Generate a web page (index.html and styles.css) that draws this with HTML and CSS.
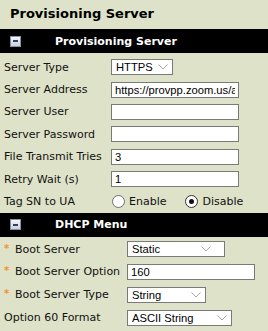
FILE: index.html
```html
<!DOCTYPE html>
<html lang="en">
    <head>
        <meta charset="UTF-8">
        <title>Provisioning Server</title>
        <link rel="stylesheet" href="styles.css">
    </head>
    <body>
        <h1 class="page-title">Provisioning Server</h1>

        <!--provisioning server panel-->
        <section class="panel">
            <div class="panel-bar">
                <span class="collapse-btn"><span class="collapse-minus"></span></span>
                <span class="panel-title">Provisioning Server</span>
            </div>
            <div class="form-grid server-form">
                <label>Server Type</label>
                <div class="select select-https"><span>HTTPS</span>
                    <svg class="chevron" width="10" height="6" viewBox="0 0 10 6"><path d="M0.5 0.5 L5 5 L9.5 0.5" fill="none" stroke="#a6a6a6" stroke-width="1"/></svg>
                </div>

                <label>Server Address</label>
                <input type="text" class="text-input" value="https://provpp.zoom.us/api/v2/pbx/provisioning">

                <label>Server User</label>
                <input type="text" class="text-input" value="">

                <label>Server Password</label>
                <input type="password" class="text-input" value="">

                <label>File Transmit Tries</label>
                <input type="text" class="text-input" value="3">

                <label>Retry Wait (s)</label>
                <input type="text" class="text-input" value="1">

                <label>Tag SN to UA</label>
                <div class="radio-group">
                    <label class="radio-option"><input type="radio" name="tag-sn"> Enable</label>
                    <label class="radio-option"><input type="radio" name="tag-sn" checked> Disable</label>
                </div>
            </div>
        </section>

        <!--dhcp menu panel-->
        <section class="panel">
            <div class="panel-bar">
                <span class="collapse-btn"><span class="collapse-minus"></span></span>
                <span class="panel-title">DHCP Menu</span>
            </div>
            <div class="form-grid dhcp-form">
                <label><span class="required">*</span>Boot Server</label>
                <div class="select select-static"><span>Static</span>
                    <svg class="chevron" width="10" height="6" viewBox="0 0 10 6"><path d="M0.5 0.5 L5 5 L9.5 0.5" fill="none" stroke="#a6a6a6" stroke-width="1"/></svg>
                </div>

                <label><span class="required">*</span>Boot Server Option</label>
                <input type="text" class="text-input" value="160">

                <label><span class="required">*</span>Boot Server Type</label>
                <div class="select select-string"><span>String</span>
                    <svg class="chevron" width="10" height="6" viewBox="0 0 10 6"><path d="M0.5 0.5 L5 5 L9.5 0.5" fill="none" stroke="#a6a6a6" stroke-width="1"/></svg>
                </div>

                <label>Option 60 Format</label>
                <div class="select select-ascii"><span>ASCII String</span>
                    <svg class="chevron" width="10" height="6" viewBox="0 0 10 6"><path d="M0.5 0.5 L5 5 L9.5 0.5" fill="none" stroke="#a6a6a6" stroke-width="1"/></svg>
                </div>
            </div>
        </section>
    </body>
</html>
```

FILE: styles.css
```css
body {
    margin: 0;
    background-color: #dee2c8; /*olive grey page*/
    color: #111;
    font-family: "DejaVu Sans", Verdana, sans-serif;
    font-size: 11px;
}

.page-title {
    margin: 0;
    height: 29px;
    line-height: 27px;
    padding-left: 10px;
    font-size: 13px;
    font-weight: bold;
    color: #000;
}

.panel-bar {
    height: 24px;
    background-color: #000;
    display: flex;
    align-items: center;
}

.collapse-btn {
    width: 11px;
    height: 11px;
    box-sizing: border-box;
    margin-left: 10px;
    border: 1px solid #8593a8;
    background: linear-gradient(#f4f6fa, #c9d1de); /*little button look*/
    display: flex;
    align-items: center;
    justify-content: center;
}

.collapse-minus {
    width: 5px;
    height: 2px;
    background-color: #33415a;
}

.panel-title {
    margin-left: 34px;
    color: #fff;
    font-weight: bold;
    font-size: 11px;
}

.form-grid {
    display: grid;
    align-items: center;
    padding-left: 4px;
}

.server-form {
    grid-template-columns: 107px 1fr;
    grid-auto-rows: 22.4px;
    padding-top: 3px;
}

.dhcp-form {
    grid-template-columns: 123px 1fr;
    grid-auto-rows: 22.8px;
    padding-top: 1px;
}

.form-grid > label {
    white-space: nowrap;
}

.required {
    display: inline-block;
    width: 11px;
    color: #f39333; /*orange star*/
    font-size: 10px;
    font-weight: bold;
    vertical-align: 1px;
}

.text-input {
    box-sizing: border-box;
    width: 128px;
    height: 16px;
    margin: 0;
    padding: 0 3px;
    border: 1px solid #7a7a7a;
    background-color: #fff;
    font-family: "Liberation Sans", Arial, sans-serif;
    font-size: 11.2px;
    color: #000;
    outline: none;
}

.select {
    box-sizing: border-box;
    height: 16px;
    border: 1px solid #7a7a7a;
    background-color: #fff;
    display: flex;
    align-items: center;
    justify-content: space-between;
    padding: 0 4px 0 4px;
    font-family: "Liberation Sans", Arial, sans-serif;
    font-size: 11.2px;
    color: #000;
}

.select-https { width: 62px; }
.select-static { width: 98px; padding-right: 13px; }
.select-string { width: 79px; }
.select-ascii { width: 105px; }

.chevron {
    display: block;
}

.radio-group {
    display: flex;
    align-items: center;
    gap: 19px;
    padding-left: 1px;
}

.radio-option {
    display: flex;
    align-items: center;
    gap: 4px;
}

.radio-option input {
    appearance: none;
    -webkit-appearance: none;
    margin: 0;
    width: 13px;
    height: 13px;
    box-sizing: border-box;
    border: 1px solid #6f6f6f;
    border-radius: 50%;
    background-color: #fff;
    display: flex;
    align-items: center;
    justify-content: center;
}

.radio-option input:checked {
    border-color: #333;
}

.radio-option input:checked::after {
    content: "";
    width: 5px;
    height: 5px;
    border-radius: 50%;
    background-color: #111;
}
```
